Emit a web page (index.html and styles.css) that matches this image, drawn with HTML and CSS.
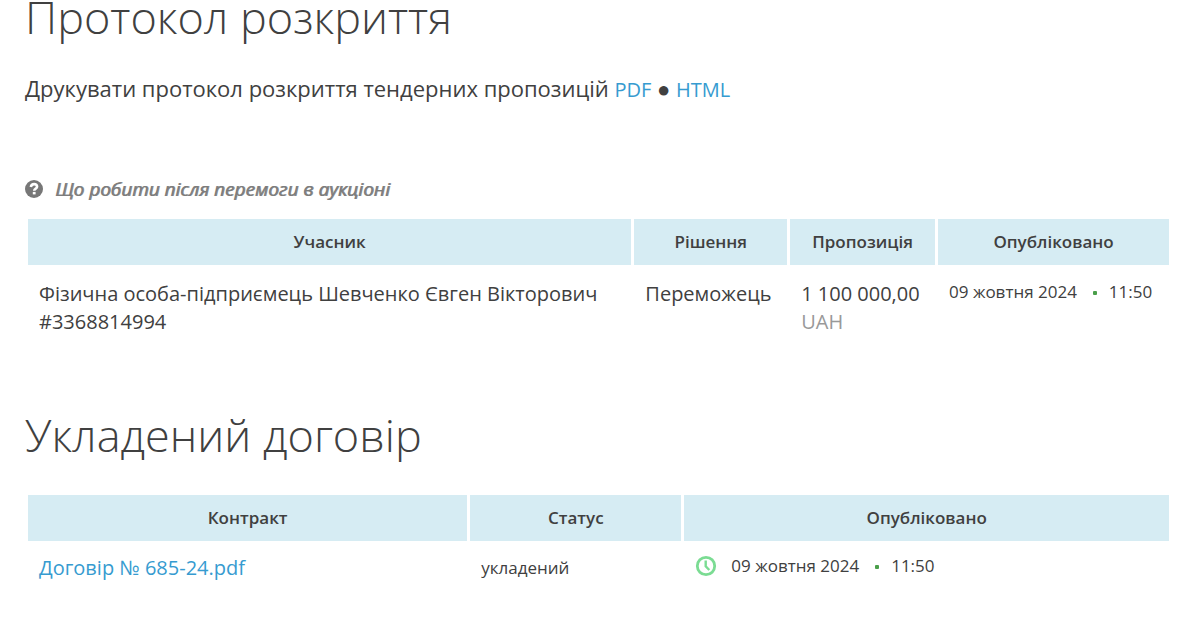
FILE: index.html
```html
<!DOCTYPE html>
<html lang="uk">
<head>
<meta charset="utf-8">
<title>Протокол розкриття</title>
<link rel="stylesheet" href="styles.css">
</head>
<body>
<main class="page">
  <section class="section">
    <h1 class="heading">Протокол розкриття</h1>
    <p class="print">Друкувати протокол розкриття тендерних пропозицій <a href="#pdf">PDF</a> <span class="dot">●</span> <a href="#html">HTML</a></p>
    <p class="hint">
      <svg class="hint-icon" viewBox="0 0 18 18" aria-hidden="true"><circle cx="9" cy="9" r="9" fill="#777"/><path d="M5.800 7C6.200 4.900 7.400 4.100 9.100 4.100C10.900 4.100 12.100 5.200 12.100 6.700C12.100 8.700 9.300 8.500 9.200 10.700" fill="none" stroke="#fff" stroke-width="2.600"/><path d="M7.800 11.900h2.800v2.500H7.800z" fill="#fff"/></svg>
      <span class="hint-text">Що робити після перемоги в аукціоні</span>
    </p>
    <table class="grid bids">
      <colgroup><col class="bidder"><col class="decision"><col class="offer"><col class="published"></colgroup>
      <thead><tr><th>Учасник</th><th>Рішення</th><th>Пропозиція</th><th>Опубліковано</th></tr></thead>
      <tbody><tr>
        <td>Фізична особа-підприємець Шевченко Євген Вікторович #3368814994</td>
        <td>Переможець</td>
        <td><span class="amount">1 100 000,00</span> <span class="currency">UAH</span></td>
        <td><div class="date"><span>09 жовтня 2024</span><span class="bullet"></span><span>11:50</span></div></td>
      </tr></tbody>
    </table>
  </section>
  <section class="section">
    <h2 class="heading">Укладений договір</h2>
    <table class="grid contracts">
      <colgroup><col class="contract"><col class="status"><col class="signed"></colgroup>
      <thead><tr><th>Контракт</th><th>Статус</th><th>Опубліковано</th></tr></thead>
      <tbody><tr>
        <td><a href="#contract">Договір № 685-24.pdf</a></td>
        <td class="small">укладений</td>
        <td><div class="date"><svg class="clock" viewBox="0 0 22 22" aria-hidden="true"><circle cx="11" cy="11" r="8.700" fill="none" stroke="#7bdc93" stroke-width="2.800"/><path d="M10.700 5.500v5.800l3.600 3.700" fill="none" stroke="#7bdc93" stroke-width="2.400"/></svg><span>09 жовтня 2024</span><span class="bullet"></span><span>11:50</span></div></td>
      </tr></tbody>
    </table>
  </section>
</main>
</body>
</html>
```
FILE: styles.css
```css
* { box-sizing: border-box; }
body { margin: 0; background: #fff; color: #404040; font: 20px/28px "Open Sans", sans-serif; }
a { color: #369bd0; text-decoration: none; }
.page { padding: 0 28px 0 25px; }
.section + .section { margin-top: 54px; }
.heading { margin: 0; font-size: 45px; line-height: 60px; font-weight: 300; }
h1.heading { margin-top: -13px; }
.print { margin: 26px 0 0; font-size: 22px; line-height: 30px; }
.print a { font-size: 20px; }
.dot { font-size: 22px; }
.hint { display: flex; align-items: center; gap: 12px; margin: 70px 0 0; color: #7c7c7c; font-size: 19px; line-height: 28px; font-style: italic; text-shadow: 1px 0 #8c8c8c; }
.hint-icon { width: 18px; height: 18px; }
.grid { width: 100%; table-layout: fixed; border-collapse: separate; border-spacing: 3px; }
.bids { margin-top: 13px; }
.contracts { margin-top: 27px; }
.grid th { height: 46px; padding: 0; background: #d6ecf3; font-size: 17px; line-height: 24px; font-weight: 600; }
.grid td { padding: 12px 11px; vertical-align: top; }
.contracts td { padding-top: 10px; }
.bidder { width: 53.3%; }
.decision { width: 13.5%; }
.offer { width: 12.8%; }
.contract { width: 38.7%; }
.status { width: 18.6%; }
.currency { color: #999; }
.grid .small { font-size: 17px; }
.date { display: flex; align-items: center; font-size: 17px; line-height: 24px; white-space: nowrap; }
.bullet { width: 4px; height: 4px; margin: 2px 12px 0 16px; border-radius: 1px; background: #4a9f4a; }
.clock { width: 22px; height: 22px; margin-right: 14px; }
```
